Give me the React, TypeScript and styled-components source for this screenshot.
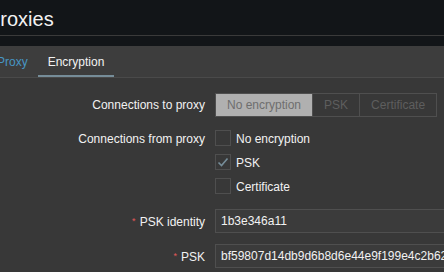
import React from 'react';
import styled, { createGlobalStyle } from 'styled-components';

const GlobalStyle = createGlobalStyle`
    html, body {
        margin: 0;
        padding: 0;
        background: #383838;
        overflow: hidden;
    }
    body {
        font-family: "Liberation Sans", Arial, sans-serif;
        font-size: 12px;
        color: #f2f2f2;
    }
`

const Page = styled.div`
    margin-left: -13px;
    width: 700px;
    height: 272px;
    display: flex;
    flex-direction: column;
`

const Header = styled.div`
    background: #121518;
    height: 31px;
    padding: 4px 0 0 0;
    border-bottom: 1px solid #3a3a3a;
`

const Title = styled.h1`
    margin: 0;
    font-size: 20px;
    line-height: 31px;
    font-weight: normal;
    color: #f2f2f2;
`

const Spacer = styled.div`
    height: 10px;
    background: #121518;
`

const TabBar = styled.div`
    display: flex;
    background: #3d3d3d;
    height: 31px;
    border-bottom: 1px solid #4a4a4a;
`

interface TabProp {
    active?: boolean;
}

const Tab = styled.div<TabProp>`
    box-sizing: border-box;
    height: 31px;
    padding: 3px 10px 0;
    line-height: 26px;
    color: ${(props) => (props.active ? '#f2f2f2' : '#4796c4')};
    border-bottom: 2px solid ${(props) => (props.active ? '#768d99' : 'transparent')};
    cursor: pointer;
`

const Form = styled.div`
    display: grid;
    grid-template-columns: 218px 1fr;
    column-gap: 10px;
    row-gap: 10px;
    padding-top: 15px;
    align-items: start;
`

const Label = styled.div`
    text-align: right;
    line-height: 24px;
    white-space: nowrap;
`

const Required = styled.span`
    color: #e45959;
    font-size: 9px;
    vertical-align: 2px;
    margin-right: 4px;
`

const Segmented = styled.div`
    display: flex;
    align-self: start;
    width: max-content;
    border: 1px solid #4f4f4f;
    height: 22px;
`

const Segment = styled.div<TabProp>`
    padding: 0 11px;
    line-height: 22px;
    color: ${(props) => (props.active ? '#6e6e6e' : '#5e5e5e')};
    background: ${(props) => (props.active ? '#b0b0b0' : 'transparent')};
    border-left: 1px solid #4f4f4f;
    &:first-child {
        border-left: none;
    }
`

const CheckList = styled.div`
    display: flex;
    flex-direction: column;
`

const CheckRow = styled.div`
    display: flex;
    align-items: center;
    height: 24px;
    gap: 5px;
`

const Box = styled.div`
    width: 14px;
    height: 14px;
    margin-top: -2px;
    border: 1px solid #4f4f4f;
    background: #383838;
    display: grid;
    place-items: center;
`

const Input = styled.div`
    width: 453px;
    height: 22px;
    line-height: 22px;
    padding: 0 5px;
    border: 1px solid #4f4f4f;
    background: #3b3b3b;
    white-space: nowrap;
    overflow: hidden;
`

const Check = () => (
    <svg width="12" height="10" viewBox="0 0 12 10">
        <polyline points="1.5,5.5 4.5,8.5 10.5,1.5" fill="none" stroke="#768d99" strokeWidth="1.6" />
    </svg>
)

const options = [
    {name: 'No encryption', checked: false},
    {name: 'PSK', checked: true},
    {name: 'Certificate', checked: false},
]

const App: React.FC = () => {
    return <>
        <GlobalStyle />
        <Page>
            <Header>
                <Title>Proxies</Title>
            </Header>
            <Spacer />
            <TabBar>
                <Tab>Proxy</Tab>
                <Tab active>Encryption</Tab>
            </TabBar>
            <Form>
                <Label>Connections to proxy</Label>
                <Segmented>
                    <Segment active>No encryption</Segment>
                    <Segment>PSK</Segment>
                    <Segment>Certificate</Segment>
                </Segmented>

                <Label>Connections from proxy</Label>
                <CheckList>
                    {options.map((opt) => (
                        <CheckRow key={opt.name}>
                            <Box>{opt.checked ? <Check /> : null}</Box>
                            {opt.name}
                        </CheckRow>
                    ))}
                </CheckList>

                <Label><Required>*</Required>PSK identity</Label>
                <Input>1b3e346a11</Input>

                <Label><Required>*</Required>PSK</Label>
                <Input>bf59807d14db9d6b8d6e44e9f199e4c2b62a0e4a0e05c0c3fb0e8cd4a6b2b8f7</Input>
            </Form>
        </Page>
    </>
}

export default App;
